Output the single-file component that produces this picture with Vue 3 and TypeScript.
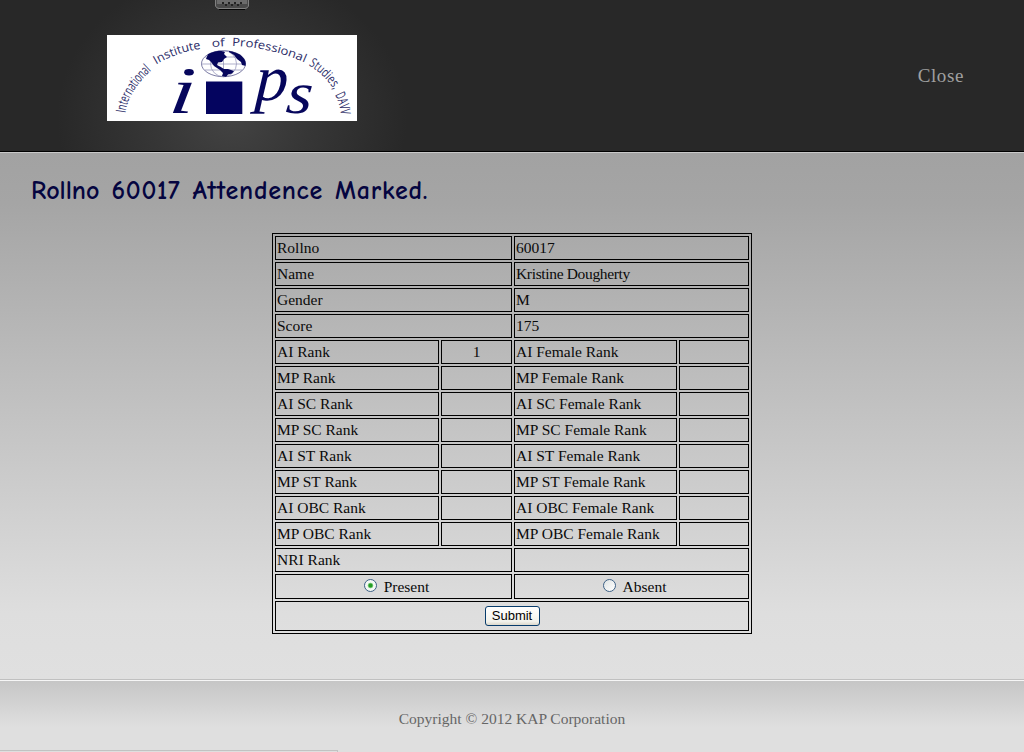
<script setup lang="ts">
import { ref } from 'vue'

interface Cell {
  text: string
  span?: number
  center?: boolean
}

const details: [string, string][] = [
  ['Rollno', '60017'],
  ['Name', 'Kristine Dougherty'],
  ['Gender', 'M'],
  ['Score', '175'],
]
const categories = ['', 'SC ', 'ST ', 'OBC ']

const cells: Cell[] = [
  ...details.flatMap(([label, value]) => [
    { text: label, span: 2 },
    { text: value, span: 2 },
  ]),
  ...categories.flatMap((cat) =>
    ['AI', 'MP'].flatMap((scope) => [
      { text: `${scope} ${cat}Rank` },
      { text: scope === 'AI' && cat === '' ? '1' : '', center: true },
      { text: `${scope} ${cat}Female Rank` },
      { text: '', center: true },
    ]),
  ),
  { text: 'NRI Rank', span: 2 },
  { text: '', span: 2 },
]

const attendance = ref<'Present' | 'Absent'>('Present')
const options = ['Present', 'Absent'] as const
</script>

<template>
  <div class="page">
    <header class="header">
      <div class="brand">
        <svg class="handle" width="34" height="11" viewBox="0 0 34 11">
          <path d="M1 0H33V6Q33 9 29 9.5H5Q1 9 1 6Z" fill="#4a4a4a" />
          <path d="M2 0H32V4H2Z" fill="#6c6c6c" />
          <path d="M.5 0V6Q1 8 4 8.5H30Q33 8 33.5 6V0" fill="none" stroke="#808080" />
          <path d="M4 9.5H30" stroke="#050505" />
          <path d="M7 3h2M13 3h2M19 3h2M25 3h2M10 5h2M16 5h2M22 5h2" stroke="#222" stroke-width="2" />
        </svg>
        <svg class="logo" width="250" height="86" viewBox="0 0 250 86">
          <defs>
            <path id="w1" d="M18.5 78Q21 56 46 34" />
            <path id="w2" d="M49 29.5Q70 17 96 13.5" />
            <path id="w3" d="M105 12L120 11" />
            <path id="w4" d="M125 11Q163 12 200 28.5" />
            <path id="w5" d="M201.500 30Q220 41 229 59" />
            <path id="w6" d="M228 60Q233 69 234 82" />
            <clipPath id="disc"><ellipse cx="116.5" cy="28.7" rx="22.3" ry="13.2" /></clipPath>
          </defs>
          <rect width="250" height="86" fill="#fff" />
          <g class="arc">
            <text font-size="14"><textPath href="#w1" textLength="51" lengthAdjust="spacingAndGlyphs">International</textPath></text>
            <text font-size="12"><textPath href="#w2" textLength="48" lengthAdjust="spacingAndGlyphs">Institute</textPath></text>
            <text font-size="11"><textPath href="#w3" textLength="13" lengthAdjust="spacingAndGlyphs">of</textPath></text>
            <text font-size="11.5"><textPath href="#w4" textLength="75" lengthAdjust="spacingAndGlyphs">Professional</textPath></text>
            <text font-size="13"><textPath href="#w5" textLength="36" lengthAdjust="spacingAndGlyphs">Studies,</textPath></text>
            <text font-size="14"><textPath href="#w6" textLength="21" lengthAdjust="spacingAndGlyphs">DAVV</textPath></text>
          </g>
          <g fill="none" stroke="#8c8cb4" stroke-width=".7">
            <ellipse cx="116.5" cy="28.7" rx="22" ry="13" stroke="#44447c" />
            <ellipse cx="116.5" cy="28.7" rx="13" ry="13" />
            <path d="M116.500 16V42M94.500 29H138.500M98 22H135M98 35H135" />
          </g>
          <g fill="#06065c" clip-path="url(#disc)">
            <path d="M99 24L101 19L104 17L111 15L118 17L117 19L120 22L117 24L115 27L111 27.500L110 30L113 31.500L117 34L121 34L127 36L125 38.500L121 39.500L119 42L115 41L116 38L113 35L107 31L104 27L102 25Z" />
            <path d="M122 14L130 16L139 22V31L135 30L134 27L130 24L127 20L122 17Z" />
          </g>
          <rect x="99" y="46.5" width="36.3" height="32.5" fill="#04045f" />
          <g class="letters">
            <text transform="translate(61 77.5) skewX(-8) scale(1.38 1)" font-size="66">ı</text>
            <ellipse cx="82" cy="37.3" rx="4.800" ry="3.2" />
            <text transform="translate(147.500 64.500) skewX(-3) scale(1 .98)" font-size="66">p</text>
            <text transform="translate(178 78) skewX(-6) scale(1.12 .98)" font-size="60">s</text>
          </g>
        </svg>
      </div>
      <a class="close">Close</a>
    </header>

    <main class="main">
      <h1 class="message"><span class="tight">Rollno</span> 60017 Attendence Marked.</h1>
      <form class="record" @submit.prevent>
        <div
          v-for="(cell, i) in cells"
          :key="i"
          class="cell"
          :class="{ wide: cell.span === 2, center: cell.center, name: i === 3 }"
        >{{ cell.text }}</div>
        <label v-for="option in options" :key="option" class="cell wide center choice">
          <input v-model="attendance" type="radio" name="attendance" :value="option" />
          <span>{{ option }}</span>
        </label>
        <div class="cell full center">
          <button class="submit" type="submit">Submit</button>
        </div>
      </form>
    </main>

    <footer class="footer">
      <span>Copyright © 2012 KAP Corporation</span>
      <div class="status"></div>
    </footer>
  </div>
</template>

<style>
body {
  margin: 0;
  overflow: hidden;
}
</style>

<style scoped>
.page {
  width: 1024px;
  height: 752px;
  display: flex;
  flex-direction: column;
  overflow: hidden;
  font: 15.5px/22px "Liberation Serif", serif;
  color: #0a0a0a;
}
.header {
  box-sizing: border-box;
  height: 152px;
  flex: none;
  display: flex;
  justify-content: space-between;
  padding: 0 60px 0 107px;
  border-bottom: 1px solid #000;
  background: radial-gradient(ellipse 175px 150px at 232px 118px, #434343, #363636 45%, #282828 100%), #282828;
}
.brand {
  width: 250px;
  display: flex;
  flex-direction: column;
  align-items: center;
}
.handle {
  display: block;
  margin-bottom: 24px;
}
.logo {
  display: block;
}
.arc {
  font-family: "Open Sans", "Noto Sans", sans-serif;
  fill: #2c2c68;
}
.letters {
  font-family: "Liberation Serif", serif;
  font-style: italic;
  fill: #06065c;
}
.close {
  margin-top: 65px;
  font-size: 19px;
  letter-spacing: 0.6px;
  color: #a0a0a0;
}
.main {
  box-sizing: border-box;
  height: 528px;
  flex: none;
  border-top: 1px solid #c8c8c8;
  border-bottom: 1px solid #c0c0c0;
  background: linear-gradient(#a2a2a2 0, #a5a5a5 50px, #dedede 460px, #e0e0e0);
}
.message {
  margin: 20px 0 0 31px;
  height: 36px;
  font: 700 26px/36px "Comic Sans MS", "Comic Neue", Lato, sans-serif;
  font-variant-ligatures: none;
  letter-spacing: 0.75px;
  word-spacing: 2px;
  white-space: nowrap;
  color: #050540;
}
.tight {
  letter-spacing: 0;
}
.record {
  box-sizing: border-box;
  width: 480px;
  margin: 24px auto 0;
  padding: 2px;
  border: 1px solid #000;
  display: grid;
  grid-template-columns: 164px 71px 163px 70px;
  grid-template-rows: repeat(13, 24px) 25px 30px;
  gap: 2px;
}
.cell {
  box-sizing: border-box;
  border: 1px solid #000;
  padding: 0 1px;
  white-space: nowrap;
}
.name {
  letter-spacing: -0.34px;
}
.wide {
  grid-column: span 2;
}
.full {
  grid-column: span 4;
}
.center {
  display: flex;
  justify-content: center;
  align-items: center;
}
.choice {
  gap: 7px;
  padding-left: 7px;
}
.choice span {
  padding-top: 1px;
}
.choice input {
  appearance: none;
  box-sizing: border-box;
  width: 13px;
  height: 13px;
  margin: 0 0 2px;
  border: 1px solid #3d6186;
  border-radius: 50%;
  background: linear-gradient(135deg, #dfe4e4, #fff);
}
.choice input:checked {
  background: radial-gradient(circle, #259b25 0 1.5px, #7fd07f 2.4px, #f4f8f4 3.2px);
}
.submit {
  box-sizing: border-box;
  width: 55px;
  height: 20px;
  padding: 0;
  border: 1px solid #083c6c;
  border-radius: 3px;
  background: linear-gradient(#fff, #f2f2ec 80%, #dcd8cc);
  font: 13px/18px "Liberation Sans", sans-serif;
  color: #000;
}
.footer {
  box-sizing: border-box;
  height: 72px;
  flex: none;
  display: flex;
  flex-direction: column;
  justify-content: space-between;
  align-items: center;
  padding-top: 27px;
  border-top: 1px solid #f6f6f6;
  background: linear-gradient(#c6c6c6, #dfdfdf 46px);
  color: #666;
}
.status {
  box-sizing: border-box;
  align-self: flex-start;
  width: 338px;
  height: 2px;
  border-top: 1px solid #c2c2c2;
  border-right: 1px solid #c2c2c2;
}
</style>
